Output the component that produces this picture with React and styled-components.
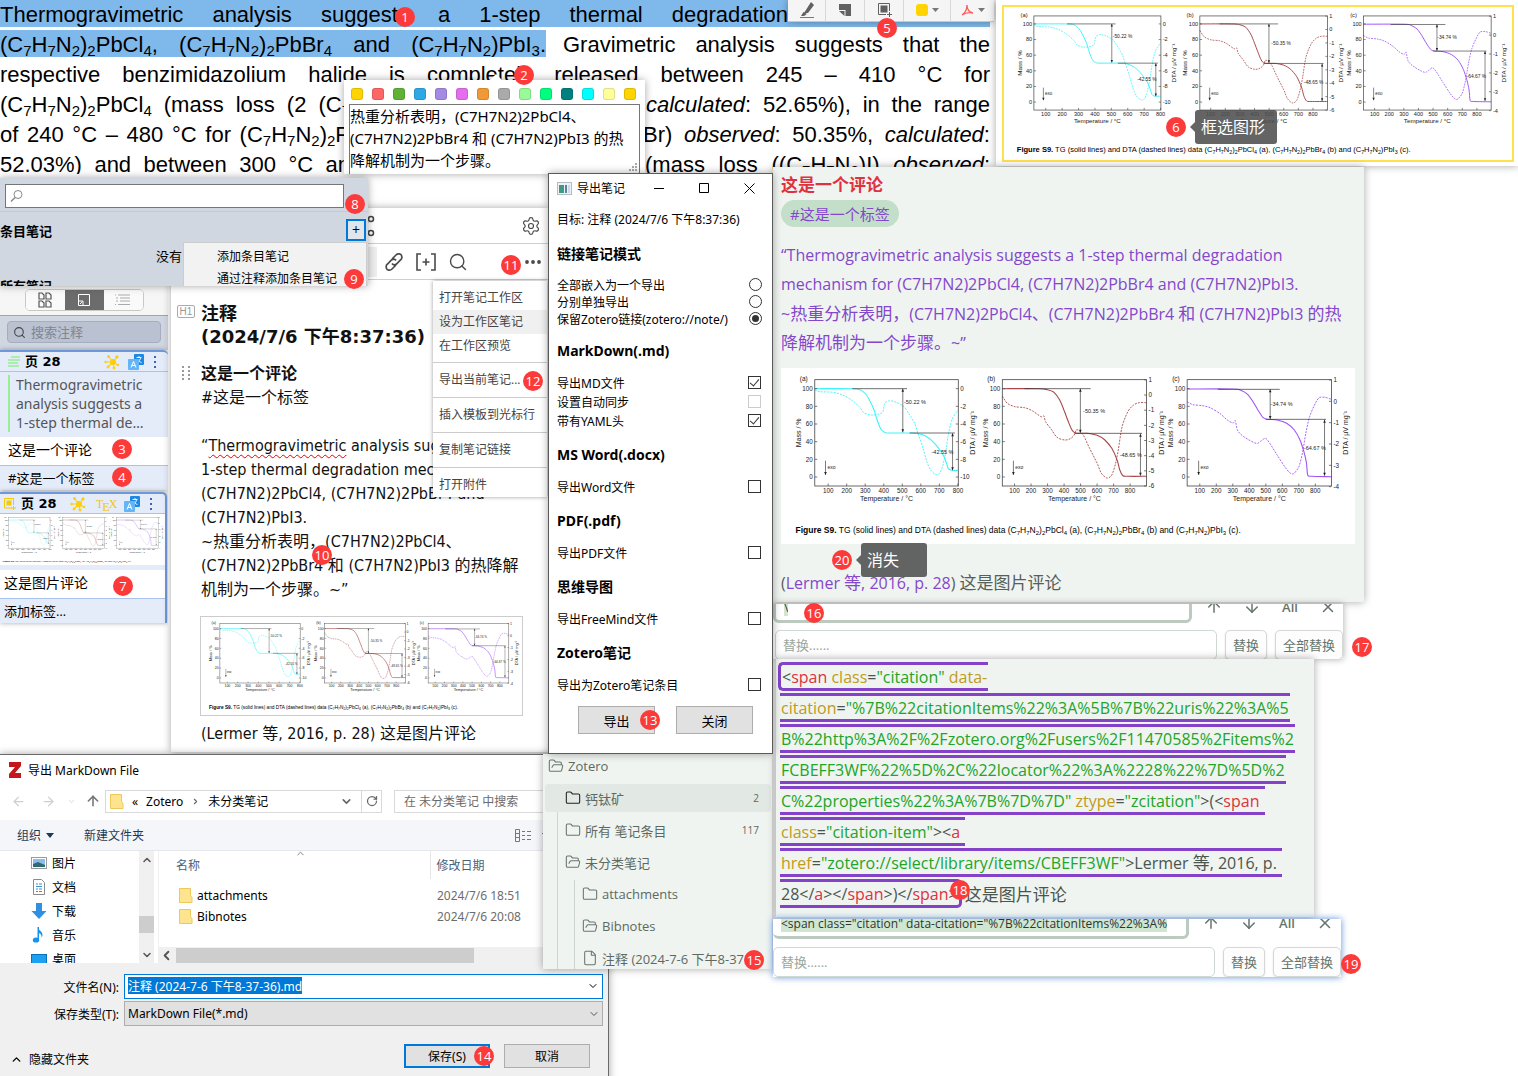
import React from 'react';
import styled, { createGlobalStyle, css } from 'styled-components';
import {
  Search, Settings, Folder, FolderOpen, File, ArrowUp, ArrowDown, X,
  ChevronDown, ChevronUp, ChevronLeft, ChevronRight, ArrowLeft, ArrowRight, RotateCw,
} from 'lucide-react';

const ui = '"Open Sans", "Noto Sans CJK SC", sans-serif';
const note = '"Noto Sans", "Noto Sans CJK SC", sans-serif';
const wide = '"DejaVu Sans", "Noto Sans CJK SC", sans-serif';
const condensed = '"DejaVu Sans Condensed", "Noto Sans CJK SC", sans-serif';
const serifless = '"Liberation Sans", Arial, sans-serif';

const Global = createGlobalStyle`
  * { box-sizing: border-box; }
  body { margin: 0; background: #fff; color: #000; font-family: ${ui}; overflow: hidden; }
  button, input, textarea, select { font: inherit; color: inherit; margin: 0; }
  button { cursor: pointer; }
  p, h1, h2, h3, ul { margin: 0; padding: 0; font-size: inherit; }
  ul { list-style: none; }
  svg { display: block; flex: none; }
`;

const Desktop = styled.main`
  position: relative;
  width: 100%;
  height: 100vh;
  overflow: hidden;
`;

const Win = styled.section`
  position: absolute;
  left: ${p => p.$x}px;
  top: ${p => p.$y}px;
  width: ${p => p.$w}px;
  height: ${p => p.$h}px;
  overflow: ${p => (p.$open ? 'visible' : 'hidden')};
  background: ${p => p.$bg || '#fff'};
  box-shadow: ${p => (p.$flat ? 'none' : '0 0 8px rgba(0, 0, 0, 0.35)')};
`;

const Badge = styled.span`
  position: absolute;
  left: ${p => p.$x - 10}px;
  top: ${p => p.$y - 10}px;
  width: 20px;
  height: 20px;
  border-radius: 50%;
  background: #fc3a3a;
  color: #fff;
  font-size: 13px;
  line-height: 20px;
  text-align: center;
`;

const IconButton = styled.button`
  display: flex;
  align-items: center;
  justify-content: center;
  width: ${p => p.$w || 16}px;
  height: ${p => p.$h || 16}px;
  padding: 0;
  border: 0;
  background: none;
  color: ${p => p.$c || 'inherit'};
  flex: none;
`;

/* Chinese runs are set one step larger than the Latin text around them */
const Zh = styled.span`
  font-size: 17px;
`;

/* ---------- article page ---------- */
const Article = styled.div`
  width: 990px;
  font-family: ${serifless};
  font-size: 22px;
  line-height: 30px;
  sub { font-size: 15px; line-height: 0; vertical-align: -4px; }
`;
const Line = styled.div`
  display: flex;
  justify-content: space-between;
  height: 30px;
  white-space: nowrap;
`;
const Part = styled.span`
  display: block;
  width: ${p => (p.$w ? p.$w + 'px' : 'auto')};
  height: ${p => (p.$hl ? '27px' : '30px')};
  flex: ${p => (p.$w ? 'none' : '1')};
  margin-right: ${p => p.$gap || 0}px;
  padding-right: ${p => p.$pad || 0}px;
  background: ${p => (p.$hl ? '#7fb9eb' : 'none')};
  white-space: normal;
  text-align: justify;
  text-align-last: justify;
`;

const Formula = ({ x = '', n = 2, k }) => (
  <>(C<sub>7</sub>H<sub>7</sub>N<sub>2</sub>){n === 2 && <sub>2</sub>}{x}{k && <sub>{k}</sub>}</>
);

function ArticlePage() {
  return (
    <Win as="article" $x={0} $y={0} $w={996} $h={174} $flat>
      <Article>
        <Line><Part $hl $pad={202}>Thermogravimetric analysis suggests a 1-step thermal degradation</Part></Line>
        <Line>
          <Part $hl $w={546} $gap={17}>
            <Formula x="PbCl" k={4} />, <Formula x="PbBr" k={4} /> and <Formula n={1} x="PbI" k={3} />.
          </Part>
          <Part>Gravimetric analysis suggests that the</Part>
        </Line>
        <Line><Part>respective benzimidazolium halide is completely released between 245 – 410 °C for</Part></Line>
        <Line>
          <Part $w={350} $gap={296}><Formula x="PbCl" k={4} /> (mass loss (2 (C<sub>7</sub></Part>
          <Part><i>calculated</i>: 52.65%), in the range</Part>
        </Line>
        <Line>
          <Part $w={350} $gap={293}>of 240 °C – 480 °C for <Formula x="P" /></Part>
          <Part>Br) <i>observed</i>: 50.35%, <i>calculated</i>:</Part>
        </Line>
        <Line>
          <Part $w={350} $gap={295}>52.03%) and between 300 °C an</Part>
          <Part>(mass loss (<Formula n={1} x="I)" /> <i>observed</i>:</Part>
        </Line>
      </Article>
    </Win>
  );
}

const ReaderBar = styled.div`
  display: grid;
  grid-template-columns: 38px 39px 39px 47px 43px;
  height: 22px;
  background: #f5f5f5;
  border-bottom: 1px solid #c9c9c9;
`;
const ReaderButton = styled.button`
  display: flex;
  align-items: center;
  justify-content: center;
  gap: 4px;
  padding: 0 0 2px;
  border: 0;
  border-right: 1px solid #d8d8d8;
  background: none;
  &:last-child { border-right: 0; }
`;
const Caret = () => <svg width="7" height="4"><path d="M0 0h7L3.500 4z" fill="#777" /></svg>;

function ReaderToolbar() {
  return (
    <Win $x={788} $y={0} $w={206} $h={22}>
      <ReaderBar>
        <ReaderButton aria-label="highlight">
          <svg width="16" height="16" viewBox="0 0 16 16"><path d="M12 0l3 3-6 8H5z" fill="#616161" /><path d="M4.500 10l3.500 2-3 2H2z" fill="#616161" /><path d="M1 15.500h14" stroke="#777" /></svg>
        </ReaderButton>
        <ReaderButton aria-label="note">
          <svg width="14" height="13" viewBox="0 0 14 13"><path d="M1 1h12v12H7.500V7H1z" fill="#616161" /><path d="M1 8h5.500v5z" fill="#616161" /></svg>
        </ReaderButton>
        <ReaderButton aria-label="area">
          <svg width="15" height="15" viewBox="0 0 15 15"><path d="M9 12.500H1.500V1.500h11V9" fill="none" stroke="#616161" /><path d="M3.500 3.500h7v7h-7zM12 10h1v2h2v1h-2v2h-1v-2h-2v-1h2z" fill="#616161" /></svg>
        </ReaderButton>
        <ReaderButton aria-label="color">
          <svg width="12" height="12"><rect width="12" height="12" rx="3" fill="#ffd400" /></svg><Caret />
        </ReaderButton>
        <ReaderButton aria-label="pdf">
          <svg width="13" height="12" viewBox="0 0 13 12" fill="none" stroke="#ff5a5a" strokeWidth="1.3"><path d="M1 11c3-2 5-6 5-10 0 4 2 7 6 8-4-1-8 0-11 2" /></svg><Caret />
        </ReaderButton>
      </ReaderBar>
    </Win>
  );
}

/* ---------- figure S9 ---------- */
const px = x => x / 2.613 - 11;
const py = y => y / 3 - 8;
const curve = flat => {
  const p = [];
  for (let i = 0; i < flat.length; i += 2) p.push([px(flat[i]), py(flat[i + 1])]);
  let d = `M${p[0].map(v => v.toFixed(1))}`;
  for (let i = 0; i < p.length - 1; i++) {
    const a = p[i - 1] || p[i], b = p[i], c = p[i + 1], e = p[i + 2] || c;
    d += `C${[b[0] + (c[0] - a[0]) / 7, b[1] + (c[1] - a[1]) / 7, c[0] - (e[0] - b[0]) / 7, c[1] - (e[1] - b[1]) / 7, c[0], c[1]].map(v => v.toFixed(1))}`;
  }
  return d;
};
const PLOTS = [
  {
    id: '(a)', color: '#3df3fb', left: 117, right: 492, first: 152, last: 491, top: 0, step: 2, lo: -10, y0: 86, unit: 26.500,
    solid: [117,86,215,86,235,89,250,102,262,125,272,150,280,180,290,208,302,218,320,219,370,219,390,221,410,230,430,250,450,280,460,305,466,326,475,331,491,331],
    dash: [117,90,130,95,165,97,190,105,215,122,235,142,245,158,265,165,285,162,295,155,300,130,312,122,330,127,350,140,365,165,378,190,388,225,400,265,410,305,420,330,432,343,443,340,452,315,460,270,465,230,475,180,491,150],
    lines: [[215, 358, 86], [365, 483, 219]], arrows: [[347, 86, 217], [477, 220, 331]],
    notes: [[350, 133, '-50.22 %'], [422, 281, '-42.55 %']], exo: 145,
  },
  {
    id: '(b)', color: '#a8484a', left: 607, right: 984, first: 639, last: 941, top: 1, step: 1, lo: -6, y0: 105, unit: 45.500,
    solid: [607,86,700,86,725,89,742,97,757,120,768,150,778,180,788,208,798,219,830,220,855,226,875,240,893,265,907,300,914,330,922,347,935,349,984,349],
    dash: [607,108,620,130,640,140,665,143,685,152,708,170,716,168,720,185,735,208,750,232,770,240,785,236,795,225,800,210,808,212,820,228,835,265,855,310,865,338,880,354,893,345,903,310,910,270,920,200,935,155,950,135,965,128,984,128],
    lines: [[665, 838, 86], [795, 972, 220]], arrows: [[811, 86, 218], [968, 221, 347]],
    notes: [[818, 158, '-50.35 %'], [914, 291, '-48.65 %']], exo: 636,
  },
  {
    id: '(c)', color: '#9d55f5', left: 1090, right: 1467, first: 1123, last: 1425, top: 1, step: 1, lo: -4, y0: 124, unit: 64,
    solid: [1090,87,1210,87,1230,91,1248,103,1262,125,1275,150,1288,172,1300,178,1325,180,1350,190,1370,210,1385,240,1395,275,1402,310,1405,345,1415,349,1467,350],
    dash: [1090,125,1105,134,1130,137,1150,143,1175,160,1195,180,1210,189,1216,182,1222,212,1240,232,1270,250,1282,244,1294,235,1305,248,1325,285,1345,320,1358,338,1368,341,1382,320,1392,275,1400,220,1410,170,1425,130,1435,113,1450,112,1467,118],
    lines: [[1170, 1332, 88], [1295, 1453, 178]], arrows: [[1307, 88, 177], [1449, 179, 347]],
    notes: [[1308, 137, '-34.74 %'], [1395, 271, '-64.67 %']], exo: 1120,
  },
];

function Arrow({ x, a, b, both }) {
  const X0 = px(x), A = py(a), B = py(b);
  return (
    <g>
      <path d={`M${X0} ${A}V${B}`} stroke="#222" strokeWidth=".6" />
      <path d={`M${X0 - 1.3} ${B - 3}h2.600L${X0} ${B}z`} fill="#222" />
      {both && <path d={`M${X0 - 1.3} ${A + 3}h2.600L${X0} ${A}z`} fill="#222" />}
    </g>
  );
}

function Plot({ p }) {
  const L = px(p.left), R = px(p.right), T = py(59), B = py(378);
  const xs = [1, 2, 3, 4, 5, 6, 7, 8].map(i => [i * 100, px(p.first + ((p.last - p.first) * (i - 1)) / 7)]);
  const ms = [0, 20, 40, 60, 80, 100].map(m => [m, py(351 - m * 2.65)]);
  const rs = [];
  for (let v = p.top; v >= p.lo; v -= p.step) rs.push([v, py(p.y0 - v * p.unit)]);
  const mid = (L + R) / 2;
  return (
    <g>
      <path d={curve(p.dash)} fill="none" stroke={p.color} strokeWidth=".9" strokeDasharray="2 1.2" />
      <path d={curve(p.solid)} fill="none" stroke={p.color} strokeWidth="1.1" />
      <rect x={L} y={T} width={R - L} height={B - T} fill="none" stroke="#444" strokeWidth=".8" />
      {p.lines.map(([a, b, y]) => <path key={y} d={`M${px(a)} ${py(y)}H${px(b)}`} stroke="#333" strokeWidth=".7" />)}
      {p.arrows.map(([x, a, b]) => <Arrow key={x} x={x} a={a} b={b} both />)}
      <Arrow x={p.exo} a={302} b={345} />
      {p.notes.map(([x, y, t]) => <text key={t} x={px(x)} y={py(y)} fontSize="5.500">{t}</text>)}
      <text x={px(p.exo + 5)} y={py(326)} fontSize="5">exo</text>
      <text x={L - 15} y={py(63)} fontSize="6.500">{p.id}</text>
      <g stroke="#444" strokeWidth=".7">
        {xs.map(([v, x]) => <path key={v} d={`M${x} ${B}v-2.500`} />)}
        {ms.map(([v, y]) => <path key={v} d={`M${L} ${y}h2.500`} />)}
        {rs.map(([v, y]) => <path key={v} d={`M${R} ${y}h-2.500`} />)}
      </g>
      <g fontSize="6.300">
        {xs.map(([v, x]) => <text key={v} x={x} y={B + 7} textAnchor="middle">{v}</text>)}
        {ms.map(([v, y]) => <text key={v} x={L - 2} y={y + 2.2} textAnchor="end">{v}</text>)}
        {rs.map(([v, y]) => <text key={v} x={R + 2} y={y + 2.2}>{v}</text>)}
      </g>
      <g fontSize="7" textAnchor="middle">
        <text x={mid} y={B + 15}>Temperature / °C</text>
        <text transform={`translate(${L - 14} ${(T + B) / 2}) rotate(-90)`}>Mass / %</text>
        <text transform={`translate(${R + 17} ${(T + B) / 2}) rotate(-90)`}>DTA / µV mg⁻¹</text>
      </g>
    </g>
  );
}

const S = ({ children }) => <tspan baselineShift="-2" fontSize="6">{children}</tspan>;
const SFormula = ({ n = 2, x, k }) => <>(C<S>7</S>H<S>7</S>N<S>2</S>){n === 2 && <S>2</S>}{x}<S>{k}</S></>;

const Sheet = styled.svg`
  display: block;
  width: 100%;
  height: ${p => (p.$h ? p.$h + 'px' : 'auto')};
  background: #fff;
  font-family: ${serifless};
  fill: #222;
`;
function FigureS9({ h }) {
  return (
    <Sheet viewBox="0 0 574 176" preserveAspectRatio="xMaxYMid slice" $h={h} role="img" aria-label="Figure S9">
      {PLOTS.map(p => <Plot key={p.id} p={p} />)}
      <text x="14.500" y="165" fontSize="8.500" fill="#000">
        <tspan fontWeight="700">Figure S9.</tspan> TG (solid lines) and DTA (dashed lines) data <SFormula x="PbCl" k="4" /> (a), <SFormula x="PbBr" k="4" /> (b) and <SFormula n={1} x="PbI" k="3" /> (c).
      </text>
    </Sheet>
  );
}

const Selection = styled.div`
  margin: 5px 4px 0 6px;
  border: 2px solid #ffe04d;
`;
const Tip = styled.div`
  position: absolute;
  left: ${p => p.$x}px;
  top: ${p => p.$y}px;
  width: ${p => p.$w}px;
  height: 34px;
  padding-left: 6px;
  border-radius: 3px;
  background: rgba(78, 79, 78, 0.88);
  color: #fff;
  font-size: 16px;
  line-height: 34px;
  &::before {
    content: '';
    position: absolute;
    left: -5px;
    top: 12px;
    border: 5px solid transparent;
    border-left: 0;
    border-right-color: rgba(78, 79, 78, 0.88);
  }
`;

/* ---------- translation popup ---------- */
const PopupTail = styled.i`
  position: absolute;
  left: 145px;
  top: -6px;
  border: 7px solid transparent;
  border-top: 0;
  border-bottom-color: #fff;
`;
const Swatches = styled.div`
  display: flex;
  gap: 9px;
  padding: 8px 7px 4px;
`;
const Swatch = styled.button`
  width: 12px;
  height: 12px;
  padding: 0;
  border: 1px solid rgba(0, 0, 0, 0.12);
  border-radius: 3px;
  background: ${p => p.$c};
`;
const Translation = styled.textarea`
  display: block;
  width: 291px;
  height: 80px;
  margin-left: 5px;
  padding: 0;
  border: 1px solid #767676;
  resize: none;
  overflow: hidden;
  white-space: pre;
  font-family: ${note};
  font-size: 15px;
  line-height: 22px;
`;
const Grip = styled.svg`
  position: absolute;
  right: 8px;
  bottom: 2px;
`;
const SWATCHES = ['#ffd400', '#ff6666', '#5fb236', '#2ea8e5', '#a28ae5', '#e56eee', '#f19837', '#aaaaaa', '#98fb98', '#00ff7f', '#008080', '#00ffff', '#ffff99', '#ffd401'];

function TranslatePopup() {
  return (
    <>
      <Win as="div" $x={344} $y={80} $w={301} $h={94} $open><PopupTail /></Win>
      <Win $x={344} $y={80} $w={301} $h={94} $flat>
        <Swatches>{SWATCHES.map(c => <Swatch key={c} $c={c} aria-label={c} />)}</Swatches>
        <Translation aria-label="翻译" spellCheck={false} defaultValue={'热重分析表明，(C7H7N2)2PbCl4、\n(C7H7N2)2PbBr4 和 (C7H7N2)PbI3 的热\n降解机制为一个步骤。'} />
        <Grip width="9" height="9" fill="#aaa"><path d="M7 0h2v2H7zM4 3h2v2H4zM7 3h2v2H7zM1 6h2v2H1zM4 6h2v2H4zM7 6h2v2H7z" /></Grip>
      </Win>
    </>
  );
}

/* ---------- item notes pane ---------- */
const NotesSearch = styled.label`
  display: flex;
  align-items: center;
  width: 339px;
  height: 24px;
  margin: 6px 0 3px 5px;
  padding-left: 4px;
  border: 1px solid #767676;
  background: #fff;
  color: #777;
  input { flex: 1; border: 0; outline: 0; background: none; min-width: 0; }
`;
const NotesHead = styled.div`
  display: flex;
  align-items: center;
  justify-content: space-between;
  height: 37px;
  padding-right: 2px;
  border-top: 1px solid #c9c9c9;
  font-size: 13px;
  font-weight: 700;
`;
const AddButton = styled.button`
  width: 20px;
  height: 22px;
  padding: 0;
  border: 2px solid #0078d7;
  background: #e1e5ec;
  font-size: 14px;
  font-weight: 400;
  line-height: 18px;
`;
const Empty = styled.p`
  height: 29px;
  padding-left: 156px;
  font-size: 13px;
  line-height: 16px;
`;
const AllNotes = styled.h3`
  font-size: 13px;
  line-height: 18px;
`;
const ContextMenu = styled.ul`
  position: absolute;
  left: 183px;
  top: 64px;
  width: 184px;
  padding: 3px 0 0 33px;
  border: 1px solid #ccc;
  background: #f2f2f2;
  font-size: 12px;
  button { padding: 0; border: 0; background: none; display: block; line-height: 22px; }
`;

function ItemNotes() {
  return (
    <Win $x={0} $y={178} $w={368} $h={108} $bg="#d1d7e1">
      <NotesSearch>
        <svg width="14" height="14" viewBox="0 0 14 14" fill="none" stroke="#888"><circle cx="8" cy="5.500" r="4" /><path d="M5 8.500L1 12.500" strokeWidth="1.400" /></svg>
        <input aria-label="搜索" />
      </NotesSearch>
      <NotesHead><h3>条目笔记</h3><AddButton>+</AddButton></NotesHead>
      <Empty>没有</Empty>
      <AllNotes>所有笔记</AllNotes>
      <ContextMenu>
        <li><button>添加条目笔记</button></li>
        <li><button>通过注释添加条目笔记</button></li>
      </ContextMenu>
    </Win>
  );
}

/* ---------- annotation sidebar ---------- */
const SideTop = styled.div`
  display: flex;
  justify-content: center;
  height: 30px;
  padding: 3px 0 0;
  background: #f6f6f6;
  border-bottom: 1px solid #a5a5a5;
`;
const Segments = styled.div`
  display: grid;
  grid-template-columns: repeat(3, 39px);
  height: 22px;
  border: 1px solid #c8c8c8;
  border-radius: 5px;
  background: #fff;
  overflow: hidden;
`;
const Segment = styled.button`
  display: flex;
  align-items: center;
  justify-content: center;
  padding: 0;
  border: 0;
  background: ${p => (p.$on ? '#6c6c6c' : '#fafafa')};
`;
const SideSearchRow = styled.div`
  height: 34px;
  padding: 5px 7px;
  background: #d1d7e1;
`;
const SideSearch = styled.label`
  display: flex;
  align-items: center;
  gap: 5px;
  height: 22px;
  padding-left: 5px;
  border: 1px solid #a4adc2;
  border-radius: 4px;
  background: #bac1d0;
  color: #444;
  input { flex: 1; min-width: 0; padding: 0; border: 0; background: none; font-size: 13px; line-height: 20px; }
  input::placeholder { color: #7f8694; }
`;
const Card = styled.div`
  width: ${p => p.$w}px;
  border: solid #6f97dc;
  border-width: 2px ${p => (p.$edge ? 2 : 0)}px 0 0;
  border-radius: 0 5px 0 0;
  background: #e4ebf9;
  box-shadow: 0 0 5px rgba(0, 0, 0, 0.35);
`;
const CardHead = styled.div`
  display: flex;
  align-items: center;
  height: 20px;
  padding: 0 ${p => p.$r}px 0 ${p => p.$l}px;
  gap: 5px;
  border-bottom: 1px solid #a9c2ee;
  font-family: ${wide};
  font-size: 13px;
  font-weight: 700;
  line-height: 18px;
`;
const HeadTools = styled.span`
  display: flex;
  align-items: center;
  gap: 8px;
  margin-left: auto;
`;
const Tex = styled.button`
  width: 20px;
  margin-left: 2px;
  padding: 0;
  border: 0;
  background: none;
  color: #efc61a;
  font-family: "Liberation Serif", serif;
  font-size: 12px;
  font-weight: 400;
  line-height: 16px;
  sub { font-size: 12px; vertical-align: -3px; line-height: 0; margin: 0 -1px; }
`;
const Excerpt = styled.p`
  margin: 3px 8px 5px;
  padding-left: 6px;
  border-left: 2px solid #98ee93;
  color: #555;
  font-family: ${note};
  font-size: 14px;
  line-height: 19px;
  white-space: pre;
`;
const Comment = styled.p`
  height: 29px;
  padding-left: ${p => p.$l}px;
  border-bottom: 1px solid #a9c2ee;
  background: #fff;
  font-size: 14px;
  line-height: 26px;
`;
const TagRow = styled.p`
  height: 24px;
  padding-left: ${p => p.$l}px;
  font-size: 13px;
  line-height: 24px;
`;
const Thumb = styled.div`
  padding-bottom: 5px;
`;
const SideBody = styled.div`
  display: flex;
  flex-direction: column;
  gap: 2px;
`;

const Molecule = () => (
  <svg width="16" height="16" viewBox="0 0 16 16" fill="#ffce0a" stroke="#ffce0a"><path d="M9 8L4 2M9 8l4-5M9 8l5 3M9 8l1 6M9 8l-5 5M9 8H1" strokeWidth="1.100" fill="none" /><circle cx="9" cy="8" r="2.600" /><circle cx="4.500" cy="2.500" r="1" /><circle cx="13" cy="3" r="1.200" /><circle cx="14" cy="11" r=".8" /><circle cx="10" cy="14" r="1" /><circle cx="4" cy="13" r="1" /><circle cx="1.500" cy="8" r=".8" /></svg>
);
const Translate = () => (
  <svg width="16" height="16" viewBox="0 0 16 16"><rect x="6" y="0" width="10" height="11" rx="1" fill="#1e88e5" /><path d="M8.500 3.500h5M11 2v1.500M9 8.500c2-1 3.500-3 3.500-5M9.500 5c1 2 2 3 4 3.500" stroke="#fff" strokeWidth=".9" fill="none" /><rect x="0" y="5" width="11" height="11" rx="1" fill="#64b5f6" /><path d="M3 13.500L5.500 7.500 8 13.500M4 11.500h3" stroke="#fff" strokeWidth="1" fill="none" /></svg>
);
const Dots = () => <svg width="6" height="12" fill="#3f63ae"><path d="M2 0h2v2H2zM2 5h2v2H2zM2 10h2v2H2z" /></svg>;

function Sidebar() {
  return (
    <Win as="aside" $x={0} $y={286} $w={168} $h={466} $flat>
      <SideTop>
        <Segments>
          <Segment aria-label="缩略图"><svg width="14" height="16" viewBox="0 0 14 16" fill="none" stroke="#555" strokeWidth="1.200"><path d="M1 1h3l2 2v4H1zM8 1h3l2 2v4H8zM1 9h3l2 2v4H1zM8 9h3l2 2v4H8z" /></svg></Segment>
          <Segment $on aria-label="注释"><svg width="12" height="12" viewBox="0 0 12 12" fill="none" stroke="#fff"><path d="M.5.5h11v11H.5z" /><path d="M1 7h4v4M2 10l2-2" /></svg></Segment>
          <Segment aria-label="大纲"><svg width="16" height="12" viewBox="0 0 16 12" stroke="#aaa"><path d="M0 1h1M3 1h12M1 4h2M5 4h10M1 7h2M5 7h10M0 10.500h1M3 10.500h12" /></svg></Segment>
        </Segments>
      </SideTop>
      <SideSearchRow>
        <SideSearch><Search size={13} /><input placeholder="搜索注释" /></SideSearch>
      </SideSearchRow>
      <SideBody>
        <Card $w={168}>
          <CardHead $l={8} $r={10}>
            <svg width="12" height="11" stroke="#98ee93" strokeWidth="1.500"><path d="M3 1h9M0 4h12M0 7h10M0 10h11" /></svg>
            页 28
            <HeadTools>
              <IconButton aria-label="mol"><Molecule /></IconButton>
              <IconButton aria-label="翻译"><Translate /></IconButton>
              <IconButton aria-label="更多" $w={6}><Dots /></IconButton>
            </HeadTools>
          </CardHead>
          <Excerpt>{'Thermogravimetric\nanalysis suggests a\n1-step thermal de…'}</Excerpt>
          <Comment $l={8}>这是一个评论</Comment>
          <TagRow $l={8}>#这是一个标签</TagRow>
        </Card>
        <Card $w={167} $edge>
          <CardHead $l={4} $r={11}>
            <svg width="12" height="12" viewBox="0 0 12 12"><path d="M8 10H.5V.5h9V7" fill="none" stroke="#f7c900" /><path d="M2.500 2.500h5v5h-5zM9 8h1v1.500h2v1h-2V12H9v-1.500H7.500v-1H9z" fill="#f7c900" /></svg>
            页 28
            <HeadTools>
              <IconButton aria-label="mol"><Molecule /></IconButton>
              <Tex>T<sub>E</sub>X</Tex>
              <IconButton aria-label="翻译"><Translate /></IconButton>
              <IconButton aria-label="更多" $w={6}><Dots /></IconButton>
            </HeadTools>
          </CardHead>
          <Thumb><FigureS9 h={51} /></Thumb>
          <Comment $l={4}>这是图片评论</Comment>
          <TagRow $l={4}>添加标签…</TagRow>
        </Card>
      </SideBody>
    </Win>
  );
}

/* ---------- note editor ---------- */
const EditorBar = styled.div`
  display: flex;
  align-items: center;
  gap: 8px;
  height: 36px;
  padding: 0 7px 0 ${p => p.$l}px;
  border-bottom: 1px solid #cfcfcf;
  color: #4a4a4a;
`;
const Spacer = styled.span`
  flex: 1;
`;
const Shade = styled.span`
  width: 9px;
  height: 30px;
  margin-right: -3px;
  background: #eee;
`;
const EditorBody = styled.div`
  display: grid;
  grid-template-columns: 30px 1fr;
  padding-top: 22px;
  font-family: ${condensed};
  font-size: 16px;
  line-height: 24px;
`;
const Gutter = styled.div`
  display: flex;
  flex-direction: column;
  align-items: center;
  gap: 48px;
  padding-top: 3px;
`;
const H1Mark = styled.span`
  width: 18px;
  height: 13px;
  border: 1px solid #aaa;
  border-radius: 2px;
  color: #999;
  font-family: ${serifless};
  font-size: 10px;
  line-height: 11px;
  text-align: center;
`;
const NoteTitle = styled.h1`
  margin-bottom: 14px;
  color: #111;
  font-family: ${wide};
  font-size: 18px;
  line-height: 23px;
  white-space: nowrap;
`;
const NoteText = styled.p`
  color: #111;
  white-space: pre;
  u { text-decoration: underline wavy #e00 1px; text-underline-offset: 3px; }
`;
const NoteFigure = styled.figure`
  width: 323px;
  margin: 14px 0 6px -1px;
  border: 1px solid #ccc;
`;
const MoreMenu = styled.div`
  position: absolute;
  left: 262px;
  top: 73px;
  width: 114px;
  background: #fff;
  color: #444;
  font-size: 12px;
  box-shadow: 0 0 4px rgba(0, 0, 0, 0.4);
`;
const MenuGroup = styled.div`
  padding: ${p => (p.$last ? '5px 0 0' : '5px 0')};
  border-bottom: ${p => (p.$last ? 0 : 1)}px solid #ccc;
  &:first-child { padding-bottom: 4px; }
`;
const MenuItem = styled.button`
  display: block;
  width: 100%;
  height: 24px;
  padding: 0 0 0 6px;
  border: 0;
  background: ${p => (p.$on ? '#f0f0f0' : 'none')};
  text-align: left;
  line-height: 24px;
  white-space: nowrap;
`;

function NoteEditor() {
  return (
    <Win $x={171} $y={208} $w={377} $h={544}>
      <EditorBar $l={194}>
        <svg width="10" height="22" viewBox="0 0 10 22" fill="none" stroke="#444" strokeWidth="1.500"><circle cx="6" cy="4" r="2.500" /><circle cx="6" cy="18" r="2.500" /><path d="M0 10l3-3M0 12l3 4" /></svg>
        <Spacer />
        <IconButton $w={20} aria-label="设置"><Settings size={20} strokeWidth={1.4} /></IconButton>
      </EditorBar>
      <EditorBar $l={197}>
        <Shade />
        <IconButton $w={24} aria-label="链接">
          <svg width="20" height="20" viewBox="0 0 20 20" fill="none" stroke="#4a4a4a" strokeWidth="1.700"><path d="M8 7l4-4c2-2 5-1 5.500.5S18 7 16.500 8l-4 4c-1.500 1-3.500 1-4.500-.5M12 13l-4 4c-2 2-5 1-5.500-.5S2 13 3.500 12l4-4C9 7 11 7 12 8.500" /></svg>
        </IconButton>
        <IconButton $w={24} aria-label="引用">
          <svg width="20" height="18" viewBox="0 0 20 18" fill="none" stroke="#4a4a4a" strokeWidth="1.600"><path d="M5 1H1v16h4M15 1h4v16h-4M10 5.500v7M6.500 9h7" /></svg>
        </IconButton>
        <IconButton $w={24} aria-label="查找"><Search size={20} strokeWidth={1.7} /></IconButton>
        <Spacer />
        <IconButton aria-label="更多"><svg width="16" height="4" fill="#4a4a4a"><circle cx="2" cy="2" r="1.900" /><circle cx="8" cy="2" r="1.900" /><circle cx="14" cy="2" r="1.900" /></svg></IconButton>
      </EditorBar>
      <EditorBody>
        <Gutter>
          <H1Mark>H1</H1Mark>
          <svg width="8" height="15" fill="#999"><path d="M0 0h2v2H0zM6 0h2v2H6zM0 4h2v2H0zM6 4h2v2H6zM0 8h2v2H0zM6 8h2v2H6zM0 12h2v2H0zM6 12h2v2H6z" /></svg>
        </Gutter>
        <div>
          <NoteTitle>注释<br />(2024/7/6 下午8:37:36)</NoteTitle>
          <NoteText><b>这是一个评论</b></NoteText>
          <NoteText>{'#这是一个标签\n '}</NoteText>
          <NoteText>“<u>Thermogravimetric</u>{' analysis suggests a\n1-step thermal degradation mechanism\n(C7H7N2)2PbCl4, (C7H7N2)2PbBr4 and\n(C7H7N2)PbI3.\n~热重分析表明，(C7H7N2)2PbCl4、\n(C7H7N2)2PbBr4 和 (C7H7N2)PbI3 的热降解\n机制为一个步骤。~”'}</NoteText>
          <NoteFigure><FigureS9 /></NoteFigure>
          <NoteText>(Lermer 等, 2016, p. 28) 这是图片评论</NoteText>
        </div>
      </EditorBody>
      <MoreMenu>
        <MenuGroup>
          <MenuItem>打开笔记工作区</MenuItem>
          <MenuItem $on>设为工作区笔记</MenuItem>
          <MenuItem>在工作区预览</MenuItem>
        </MenuGroup>
        <MenuGroup><MenuItem>导出当前笔记...</MenuItem></MenuGroup>
        <MenuGroup><MenuItem>插入模板到光标行</MenuItem></MenuGroup>
        <MenuGroup><MenuItem>复制笔记链接</MenuItem></MenuGroup>
        <MenuGroup $last><MenuItem>打开附件</MenuItem></MenuGroup>
      </MoreMenu>
    </Win>
  );
}

/* ---------- export dialog ---------- */
const Dialog = styled.div`
  height: 100%;
  padding: 0 11px 0 8px;
  border: 1px solid #5a5a5a;
  font-family: ${note};
  font-size: 12px;
`;
const TitleBar = styled.header`
  display: flex;
  align-items: center;
  height: 28px;
  gap: 5px;
`;
const WindowButtons = styled.span`
  display: flex;
  gap: 23px;
  margin-left: auto;
  margin-right: 1px;
`;
const Target = styled.p`
  margin-top: 8px;
  line-height: 20px;
  white-space: nowrap;
`;
const Group = styled.h2`
  margin: 14px 0 12px;
  font-size: 14px;
  line-height: 20px;
`;
const Option = styled.label`
  display: flex;
  align-items: center;
  justify-content: space-between;
  height: ${p => (p.$radio ? 17 : 19)}px;
  white-space: nowrap;
  & + ${Group} { margin-top: ${p => (p.$radio ? 14 : 15)}px; }
`;
const box = css`
  appearance: none;
  position: relative;
  width: 13px;
  height: 13px;
  border: 1px solid ${p => (p.disabled ? '#ccc' : '#333')};
  background: #fff;
`;
const Tick = styled.input`
  ${box}
  &:checked::after {
    content: '';
    position: absolute;
    left: 3px;
    top: 0;
    width: 4px;
    height: 8px;
    border: solid #333;
    border-width: 0 1px 1px 0;
    transform: rotate(40deg);
  }
`;
const Radio = styled.input`
  ${box}
  border-radius: 50%;
  margin-right: -1px;
  &:checked::after {
    content: '';
    position: absolute;
    inset: 2px;
    border-radius: 50%;
    background: #333;
  }
`;
const DialogButtons = styled.div`
  display: flex;
  gap: 21px;
  margin: 12px 0 0 21px;
`;
const PushButton = styled.button`
  width: ${p => p.$w || 77}px;
  height: ${p => p.$h || 28}px;
  padding: 0;
  border: ${p => (p.$main ? '2px solid #0078d7' : '1px solid #adadad')};
  background: #e1e1e1;
  font-size: ${p => p.$fs || 13}px;
`;

function ExportDialog() {
  return (
    <Win $x={548} $y={173} $w={225} $h={581}>
      <Dialog>
        <TitleBar>
          <svg width="15" height="13" viewBox="0 0 15 13"><rect x=".5" y=".5" width="14" height="12" fill="#eef2f5" stroke="#b5bcc2" /><rect x="2" y="3" width="5" height="8" fill="#3f9a86" /><rect x="8" y="3" width="2" height="8" fill="#5d7fb0" /><rect x="11" y="3" width="2" height="8" fill="#cfd8e2" /></svg>
          导出笔记
          <WindowButtons>
            <IconButton $w={22} aria-label="最小化"><svg width="10" height="10"><path d="M0 5.500h10" stroke="#000" /></svg></IconButton>
            <IconButton $w={22} aria-label="最大化"><svg width="10" height="10"><path d="M.5.5h9v9h-9z" fill="none" stroke="#000" /></svg></IconButton>
            <IconButton $w={22} aria-label="关闭窗口"><svg width="11" height="11"><path d="M.5.5l10 10M10.500.5l-10 10" stroke="#000" /></svg></IconButton>
          </WindowButtons>
        </TitleBar>
        <Target>目标: 注释 (2024/7/6 下午8:37:36)</Target>
        <Group>链接笔记模式</Group>
        <Option $radio>全部嵌入为一个导出<Radio type="radio" name="link" /></Option>
        <Option $radio>分别单独导出<Radio type="radio" name="link" /></Option>
        <Option $radio>保留Zotero链接(zotero://note/)<Radio type="radio" name="link" defaultChecked /></Option>
        <Group>MarkDown(.md)</Group>
        <Option>导出MD文件<Tick type="checkbox" defaultChecked /></Option>
        <Option>设置自动同步<Tick type="checkbox" disabled /></Option>
        <Option>带有YAML头<Tick type="checkbox" defaultChecked /></Option>
        <Group>MS Word(.docx)</Group>
        <Option>导出Word文件<Tick type="checkbox" /></Option>
        <Group>PDF(.pdf)</Group>
        <Option>导出PDF文件<Tick type="checkbox" /></Option>
        <Group>思维导图</Group>
        <Option>导出FreeMind文件<Tick type="checkbox" /></Option>
        <Group>Zotero笔记</Group>
        <Option>导出为Zotero笔记条目<Tick type="checkbox" /></Option>
        <DialogButtons><PushButton>导出</PushButton><PushButton>关闭</PushButton></DialogButtons>
      </Dialog>
    </Win>
  );
}

/* ---------- markdown preview ---------- */
const Preview = styled.div`
  padding: 5px 9px 0 8px;
  font-size: 16px;
  color: #8447cc;
`;
const Red = styled.p`
  color: #e0313f;
  font-size: 17px;
  font-weight: 700;
  line-height: 26px;
`;
const Pill = styled.a`
  display: block;
  width: fit-content;
  height: 27px;
  margin-top: 2px;
  padding: 0 9px;
  border-radius: 14px;
  background: #c3dfc9;
  color: inherit;
  font-size: 15px;
  line-height: 29px;
  text-decoration: none;
`;
const Quote = styled.div`
  margin: 14px 0 11px;
  p { height: 29px; line-height: 29px; white-space: pre; }
`;
const Cite = styled.p`
  margin-top: 24px;
  color: #55605a;
  line-height: 29px;
  a { color: #8447cc; text-decoration: none; }
`;

function MarkdownPreview() {
  return (
    <Win $x={773} $y={167} $w={591} $h={435} $bg="#eff4f0">
      <Preview>
        <Red>这是一个评论</Red>
        <Pill href="#tag">#这是一个标签</Pill>
        <Quote>
          <p>“Thermogravimetric analysis suggests a 1-step thermal degradation</p>
          <p>mechanism for (C7H7N2)2PbCl4, (C7H7N2)2PbBr4 and (C7H7N2)PbI3.</p>
          <p>~<Zh>热重分析表明，</Zh>(C7H7N2)2PbCl4<Zh>、</Zh>(C7H7N2)2PbBr4 <Zh>和</Zh> (C7H7N2)PbI3 <Zh>的热</Zh></p>
          <p><Zh>降解机制为一个步骤。</Zh>~”</p>
        </Quote>
        <FigureS9 />
        <Cite>(<a href="#lermer">Lermer <Zh>等</Zh>, 2016, p. 28</a>) <Zh>这是图片评论</Zh></Cite>
      </Preview>
    </Win>
  );
}

/* ---------- find / replace ---------- */
const Find = styled.div`
  display: flex;
  flex-direction: column;
  justify-content: flex-end;
  height: 100%;
  font-size: 13px;
  color: #66756b;
`;
const FindRow = styled.div`
  display: flex;
  align-items: center;
  flex: none;
  height: 32px;
  margin-bottom: ${p => p.$mb}px;
`;
const FindBox = styled.span`
  display: flex;
  align-items: center;
  flex: none;
  width: ${p => p.$w}px;
  height: 32px;
  padding-left: 8px;
  border: 3px solid #bccabf;
  border-left-width: ${p => (p.$cut ? 0 : 3)}px;
  border-radius: 6px;
  overflow: hidden;
`;
const FindInput = styled.input`
  field-sizing: content;
  max-width: 398px;
  height: 18px;
  padding: 0;
  border: 0;
  background: #cfe6d1;
  color: #333;
  font-size: 12px;
`;
const FindTools = styled.span`
  display: grid;
  grid-template-columns: repeat(4, 38px);
  align-items: center;
  justify-items: center;
  margin-left: 3px;
  font-weight: 600;
`;
const AllButton = styled.button`
  padding: 0;
  border: 0;
  background: none;
  font-size: 13px;
`;
const ReplaceRow = styled.div`
  display: flex;
  flex: none;
  gap: 8px;
  padding-left: ${p => p.$l}px;
  height: ${p => p.$h}px;
`;
const ReplaceInput = styled.input`
  flex: 1;
  min-width: 0;
  height: 30px;
  padding: 0 7px;
  border: 1px solid #cfd8d1;
  border-radius: 5px;
  background: #fff;
  &::placeholder { color: #9aa69d; }
`;
const ReplaceButton = styled.button`
  width: ${p => p.$w}px;
  height: 30px;
  padding: 0 0 2px;
  border: 1px solid #d4d9d5;
  border-radius: 5px;
  background: #fcfdfc;
  box-shadow: 0 1px 2px rgba(0, 0, 0, 0.12);
`;
const Glow = styled(Win)`
  box-shadow: 0 0 7px ${p => p.$c};
`;

function FindBar({ x, y, w, h, glow, value, boxW, cut, mb, left, rowH }) {
  return (
    <Glow $x={x} $y={y} $w={w} $h={h} $c={glow}>
      <Find>
        <FindRow $mb={mb}>
          <FindBox $w={boxW} $cut={cut}><FindInput aria-label="查找" defaultValue={value} /></FindBox>
          <FindTools>
            <IconButton $w={20} $h={20} aria-label="上一个"><ArrowUp size={18} /></IconButton>
            <IconButton $w={20} $h={20} aria-label="下一个"><ArrowDown size={18} /></IconButton>
            <AllButton>All</AllButton>
            <IconButton $w={20} $h={20} aria-label="关闭查找"><X size={18} /></IconButton>
          </FindTools>
        </FindRow>
        <ReplaceRow $l={left} $h={rowH}>
          <ReplaceInput aria-label="替换为" placeholder="替换......" />
          <ReplaceButton $w={42}>替换</ReplaceButton>
          <ReplaceButton $w={68}>全部替换</ReplaceButton>
        </ReplaceRow>
      </Find>
    </Glow>
  );
}

/* ---------- source view ---------- */
const Code = styled.div`
  padding: 2px 0 0 4px;
  font-size: 16px;
  color: #4a554f;
`;
const CodeRow = styled.div`
  display: flex;
  align-items: center;
  height: 31px;
  gap: 3px;
  white-space: pre;
`;
const Mark = styled.span`
  height: 29px;
  padding: 0 1px;
  border: solid #8342c8;
  border-width: 3px ${p => (p.$end ? 3 : 0)}px 3px ${p => (p.$start ? 3 : 0)}px;
  border-radius: ${p => (p.$start ? '5px 0 0 5px' : p.$end ? '0 5px 5px 0' : 0)};
  margin-left: ${p => (p.$start ? -2 : 0)}px;
  line-height: 24px;
`;
const T = styled.span`color: #e0313f;`;
const A = styled.span`color: #c09a1c;`;
const V = styled.span`color: #22a428;`;

function SourceView() {
  return (
    <Win $x={776} $y={659} $w={538} $h={258} $bg="#eff4f0">
      <Code>
        <CodeRow><Mark $start>&lt;<T>span</T> <A>class</A>=<V>"citation"</V> <A>data-</A></Mark></CodeRow>
        <CodeRow><Mark><A>citation</A>=<V>"%7B%22citationItems%22%3A%5B%7B%22uris%22%3A%5</V></Mark></CodeRow>
        <CodeRow><Mark><V>B%22http%3A%2F%2Fzotero.org%2Fusers%2F11470585%2Fitems%2</V></Mark></CodeRow>
        <CodeRow><Mark><V>FCBEFF3WF%22%5D%2C%22locator%22%3A%2228%22%7D%5D%2</V></Mark></CodeRow>
        <CodeRow><Mark><V>C%22properties%22%3A%7B%7D%7D"</V> <A>ztype</A>=<V>"zcitation"</V>&gt;(&lt;<T>span</T> </Mark></CodeRow>
        <CodeRow><Mark><A>class</A>=<V>"citation-item"</V>&gt;&lt;<T>a</T> </Mark></CodeRow>
        <CodeRow><Mark><A>href</A>=<V>"zotero://select/library/items/CBEFF3WF"</V>&gt;Lermer <Zh>等</Zh>, 2016, p. </Mark></CodeRow>
        <CodeRow><Mark $end>28&lt;/<T>a</T>&gt;&lt;/<T>span</T>&gt;)&lt;/<T>span</T>&gt;</Mark><Zh>这是图片评论</Zh></CodeRow>
      </Code>
    </Win>
  );
}

/* ---------- vault tree ---------- */
const Tree = styled.ul`
  padding: 0 1px;
  font-size: 13px;
  color: #5d6962;
`;
const Branch = styled.ul`
  margin-left: ${p => p.$l}px;
  border-left: 1px solid #cdd5cf;
`;
const Node = styled.li`
  display: flex;
  align-items: center;
  gap: 4px;
  height: 28px;
  margin: ${p => (p.$root ? '-2px 0 4px' : '0 0 4px')};
  margin-left: ${p => (p.$on ? -13 : 0)}px;
  padding: 0 12px 0 ${p => (p.$on ? 20 : p.$root ? 4 : 7)}px;
  border-radius: 4px;
  background: ${p => (p.$on ? '#e2e8e3' : 'none')};
  white-space: nowrap;
  svg { color: ${p => (p.$on ? '#222' : '#69766e')}; }
`;
const Count = styled.span`
  margin-left: auto;
  font-size: 10px;
`;
const I = ({ as: C }) => <C size={16} strokeWidth={1.6} />;

function VaultTree() {
  return (
    <Win as="nav" $x={543} $y={754} $w={229} $h={215} $bg="#eff4f0">
      <Tree>
        <Node $root><I as={FolderOpen} />Zotero</Node>
        <Branch as="li" $l={13}>
          <Node as="div" $on><I as={Folder} />钙钛矿<Count>2</Count></Node>
          <Node as="div"><I as={Folder} />所有 笔记条目<Count>117</Count></Node>
          <Node as="div"><I as={FolderOpen} />未分类笔记</Node>
          <Branch as="div" $l={16}>
            <Node as="div"><I as={Folder} />attachments</Node>
            <Node as="div"><I as={FolderOpen} />Bibnotes</Node>
            <Node as="div"><I as={File} />注释 (2024-7-6 下午8-37</Node>
          </Branch>
        </Branch>
      </Tree>
    </Win>
  );
}

/* ---------- save dialog ---------- */
const Save = styled.div`
  display: flex;
  flex-direction: column;
  height: 100%;
  border: solid #6a6a6a;
  border-width: 1px 1px 0 0;
  font-family: ${note};
  font-size: 12px;
`;
const SaveTitle = styled.header`
  display: flex;
  align-items: center;
  gap: 7px;
  height: 29px;
  padding-left: 9px;
`;
const NavRow = styled.div`
  display: flex;
  align-items: center;
  height: 36px;
  padding: 0 8px 2px 10px;
  gap: 12px;
  color: #777;
`;
const NavArrows = styled.span`
  display: grid;
  grid-template-columns: 30px 27px 18px 16px;
  width: 83px;
`;
const Address = styled.div`
  display: flex;
  align-items: center;
  width: 277px;
  height: 23px;
  gap: 8px;
  padding-left: 4px;
  border: 1px solid #d9d9d9;
  color: #000;
  svg { color: #666; }
`;
const Refresh = styled.button`
  display: flex;
  align-items: center;
  justify-content: center;
  width: 20px;
  height: 21px;
  padding: 0;
  border: 0;
  border-left: 1px solid #d9d9d9;
  background: none;
`;
const SearchBox = styled.input`
  flex: 1;
  min-width: 0;
  height: 23px;
  padding: 0 9px;
  border: 1px solid #d9d9d9;
  &::placeholder { color: #6b6b6b; }
`;
const Commands = styled.div`
  display: flex;
  align-items: center;
  height: 31px;
  padding: 0 58px 0 17px;
  gap: 30px;
  background: #f5f6f9;
  border-bottom: 1px solid #e5e7ea;
  color: #1e395b;
`;
const Command = styled.button`
  display: flex;
  align-items: center;
  gap: 5px;
  padding: 0;
  border: 0;
  background: none;
`;
const Browser = styled.div`
  display: grid;
  grid-template-columns: 139px 16px 1fr;
  height: 112px;
  overflow: hidden;
`;
const Places = styled.ul`
  overflow: hidden;
  li { display: flex; align-items: center; gap: 5px; height: 24px; padding-left: 31px; }
`;
const VScroll = styled.div`
  display: flex;
  flex-direction: column;
  align-items: center;
  width: 15px;
  padding: 3px 0 2px;
  background: #f0f0f0;
  color: #555;
`;
const VThumb = styled.span`
  width: 100%;
  height: 17px;
  margin: auto 0 16px;
  background: #cdcdcd;
`;
const Files = styled.div`
  display: flex;
  flex-direction: column;
  justify-content: space-between;
  position: relative;
  margin-left: 3px;
  border-left: 1px solid #f0f0f0;
`;
const SortMark = styled(ChevronUp)`
  position: absolute;
  left: 136px;
  top: -3px;
  color: #777;
`;
const FileTable = styled.table`
  width: 100%;
  border-collapse: collapse;
  table-layout: fixed;
  th { height: 28px; padding: 0 0 0 17px; color: #4c607a; font-weight: 400; text-align: left; }
  th + th { padding-left: 6px; border-left: 1px solid #e5e5e5; }
  td { height: 21px; padding: 0 0 0 20px; }
  td + td { padding-left: 7px; color: #6d6d6d; }
  tbody::before { content: ''; display: block; height: 6px; }
  tbody span { display: flex; align-items: center; gap: 4px; }
`;
const HScroll = styled.div`
  display: flex;
  align-items: center;
  height: 16px;
  background: #f0f0f0;
  color: #555;
`;
const HThumb = styled.span`
  width: 298px;
  height: 15px;
  margin-left: 2px;
  background: #cdcdcd;
`;
const SaveForm = styled.div`
  display: grid;
  grid-template-columns: 119px 479px;
  column-gap: 5px;
  row-gap: 2px;
  align-items: center;
  padding-top: 11px;
  label { text-align: right; }
`;
const SaveBottom = styled.div`
  flex: 1;
  background: #f0f0f0;
`;
const Combo = styled.div`
  display: flex;
  align-items: center;
  justify-content: space-between;
  height: 25px;
  padding: 0 3px 2px;
  border: 1px solid #0078d7;
  background: #fff;
`;
const FileName = styled.input`
  field-sizing: content;
  height: 17px;
  padding: 0;
  border: 0;
  background: #0078d7;
  color: #fff;
`;
const TypeWrap = styled.div`
  position: relative;
  height: 25px;
  svg { position: absolute; right: 3px; top: 7px; color: #555; }
`;
const TypeSelect = styled.select`
  appearance: none;
  width: 100%;
  height: 25px;
  padding: 0 3px;
  border: 1px solid #adadad;
  border-radius: 0;
  background: #e1e1e1;
`;
const SaveFooter = styled.footer`
  display: flex;
  align-items: center;
  gap: 14px;
  margin-top: 18px;
  padding: 0 18px 0 10px;
`;
const Hide = styled(Command)`
  gap: 6px;
  margin-right: auto;
  margin-top: 6px;
`;

const YFolder = () => <svg width="14" height="17" viewBox="0 0 14 17"><path d="M.5 1.500h11v7l1.500 2v5H.5z" fill="#ffe48f" stroke="#ecc95c" /></svg>;
const PlaceIcon = ({ k }) => (
  <svg width="16" height="16" viewBox="0 0 16 16">
    {k === 'pic' && <><rect x=".5" y="2.500" width="15" height="11" fill="#fff" stroke="#9a9a9a" /><rect x="2" y="4" width="12" height="8" fill="#8dbde8" /><path d="M2 9l5-2 7 3v2H2z" fill="#2f6b74" /></>}
    {k === 'doc' && <><path d="M2.500.5h8l3 3v12h-11z" fill="#fff" stroke="#8a8a8a" /><path d="M5 5h2M8 5h3M5 7.500h6M5 10h2M8 10h3M5 12.500h2M8 12.500h3" stroke="#3f8fc4" /></>}
    {k === 'down' && <path d="M5 0h6v8h4.500L8 16 .5 8H5z" fill="#2f8fe0" />}
    {k === 'music' && <><path d="M7.500 0c0 4 4 4 4 8 0 1-.5 2-1 2.500.5-3-1.500-4-3-4.500z" fill="#1593f0" /><path d="M6.500 0h1.500v12h-1.500z" fill="#1593f0" /><ellipse cx="5" cy="13" rx="3.200" ry="2.600" fill="#1593f0" /></>}
    {k === 'desk' && <rect x=".5" y="3.500" width="15" height="11" fill="#1ea0f2" stroke="#0b72b8" />}
  </svg>
);

function SaveDialog() {
  return (
    <Win $x={0} $y={754} $w={609} $h={340}>
      <Save>
        <SaveTitle>
          <svg width="12" height="16" viewBox="0 0 12 16"><path d="M0 0h12v4L6 11h6v5H0v-4l6-7H0z" fill="#c3171c" /></svg>
          导出 MarkDown File
        </SaveTitle>
        <NavRow>
          <NavArrows>
            <IconButton aria-label="后退" $c="#cfcfcf"><ArrowLeft size={15} /></IconButton>
            <IconButton aria-label="前进" $c="#cfcfcf"><ArrowRight size={15} /></IconButton>
            <IconButton aria-label="最近" $w={8} $c="#cfcfcf"><ChevronDown size={9} /></IconButton>
            <IconButton aria-label="上移"><ArrowUp size={16} strokeWidth={2.4} /></IconButton>
          </NavArrows>
          <Address>
            <YFolder /><span>«</span><span>Zotero</span><ChevronRight size={9} strokeWidth={3} /><span>未分类笔记</span>
            <Spacer /><ChevronDown size={13} strokeWidth={3} />
            <Refresh aria-label="刷新"><RotateCw size={12} strokeWidth={2.5} /></Refresh>
          </Address>
          <SearchBox aria-label="搜索" placeholder="在 未分类笔记 中搜索" />
        </NavRow>
        <Commands>
          <Command>组织 <svg width="8" height="5"><path d="M0 0h8L4 5z" fill="#1e395b" /></svg></Command>
          <Command>新建文件夹</Command>
          <Spacer />
          <Command aria-label="视图">
            <svg width="17" height="13" viewBox="0 0 17 13" fill="none" stroke="#777"><path d="M.5.5h4v12h-4zM.5 4.500h4M.5 8.500h4M7 2.500h3M12 2.500h4M7 6.500h3M12 6.500h4M7 10.500h3M12 10.500h4" /></svg>
            <Spacer /><svg width="8" height="5"><path d="M0 0h8L4 5z" fill="#1e395b" /></svg>
          </Command>
        </Commands>
        <Browser>
          <Places>
            <li><PlaceIcon k="pic" />图片</li>
            <li><PlaceIcon k="doc" />文档</li>
            <li><PlaceIcon k="down" />下载</li>
            <li><PlaceIcon k="music" />音乐</li>
            <li><PlaceIcon k="desk" />桌面</li>
          </Places>
          <VScroll><ChevronUp size={12} strokeWidth={3} /><VThumb /><ChevronDown size={12} strokeWidth={3} /></VScroll>
          <Files>
            <SortMark size={11} strokeWidth={2} />
            <FileTable>
              <colgroup><col width="271" /><col /></colgroup>
              <thead><tr><th>名称</th><th>修改日期</th></tr></thead>
              <tbody>
                <tr><td><span><YFolder />attachments</span></td><td>2024/7/6 18:51</td></tr>
                <tr><td><span><YFolder />Bibnotes</span></td><td>2024/7/6 20:08</td></tr>
              </tbody>
            </FileTable>
            <HScroll><ChevronLeft size={15} strokeWidth={3} /><HThumb /></HScroll>
          </Files>
        </Browser>
        <SaveBottom>
          <SaveForm>
            <label htmlFor="fname">文件名(N):</label>
            <Combo><FileName id="fname" defaultValue="注释 (2024-7-6 下午8-37-36).md" /><ChevronDown size={12} /></Combo>
            <label htmlFor="ftype">保存类型(T):</label>
            <TypeWrap>
              <TypeSelect id="ftype"><option>MarkDown File(*.md)</option></TypeSelect>
              <ChevronDown size={12} />
            </TypeWrap>
          </SaveForm>
          <SaveFooter>
            <Hide><ChevronUp size={13} strokeWidth={2.5} />隐藏文件夹</Hide>
            <PushButton $main $w={86} $h={24} $fs={12}>保存(S)</PushButton>
            <PushButton $w={86} $h={24} $fs={12}>取消</PushButton>
          </SaveFooter>
        </SaveBottom>
      </Save>
    </Win>
  );
}

const BADGES = [
  [405, 17], [524, 75], [122, 449], [122, 477], [887, 28], [1176, 127], [123, 586], [355, 204], [354, 279], [322, 555],
  [511, 265], [533, 381], [650, 720], [484, 1056], [754, 960], [814, 613], [1362, 647], [960, 890], [1351, 964], [842, 560],
];

export default function App() {
  return (
    <>
      <Global />
      <Desktop>
        <ArticlePage />
        <ReaderToolbar />
        <Win $x={996} $y={0} $w={522} $h={166}>
          <Selection><FigureS9 h={153} /></Selection>
        </Win>
        <TranslatePopup />
        <Sidebar />
        <NoteEditor />
        <ItemNotes />
        <SaveDialog />
        <VaultTree />
        <MarkdownPreview />
        <FindBar x={773} y={604} w={570} h={55} glow="rgba(0,0,0,.35)" value="\" boxW={419} mb={7} left={2} rowH={29} />
        <SourceView />
        <FindBar x={773} y={919} w={568} h={58} glow="#5c8fd8" value={'<span class="citation" data-citation="%7B%22citationItems%22%3A%'} boxW={416} cut mb={8} left={0} rowH={30} />
        <ExportDialog />
        <Tip $x={1195} $y={110} $w={82}>框选图形</Tip>
        <Tip $x={861} $y={543} $w={66}>消失</Tip>
        {BADGES.map(([x, y], i) => <Badge key={i} $x={x} $y={y}>{i + 1}</Badge>)}
      </Desktop>
    </>
  );
}
